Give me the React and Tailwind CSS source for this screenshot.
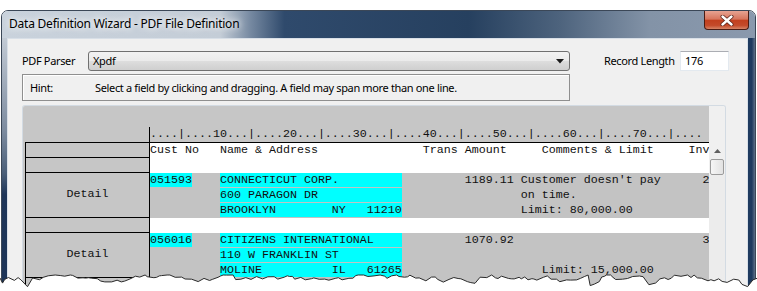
import React from "react";

const pad = (s, n) => s + " ".repeat(Math.max(0, n - s.length));
const sp = (n) => " ".repeat(n);
const C = ({ children }) => <span className="bg-[#00ffff]">{children}</span>;

const torn = (() => {
  let s = 12345;
  const rnd = () => {
    s = (s * 16807) % 2147483647;
    return s / 2147483647;
  };
  const pts = [];
  let x = 0;
  let y = 10;
  while (x <= 762) {
    pts.push([x, y]);
    x += 2 + rnd() * 5;
    let ny = y + (rnd() - 0.5) * 6;
    if (rnd() > 0.9) ny = 15 + rnd() * 4;
    y = Math.min(19, Math.max(7, ny));
    if (y > 14 && rnd() > 0.4) y = 9 + rnd() * 3;
  }
  return pts;
})();
const tornLine = torn.map((p) => `${p[0].toFixed(1)},${p[1].toFixed(1)}`).join(" L");

const Line = ({ children, className = "" }) => (
  <div className={"h-[15px] leading-[15px] whitespace-pre " + className}>{children}</div>
);

const ruler =
  "....|....10...|....20...|....30...|....40...|....50...|....60...|....70...|....";
const header =
  "Cust No   Name & Address" + sp(15) + "Trans Amount" + sp(5) + "Comments & Limit" + sp(5) + "Inv";

function LeftCell({ h, children }) {
  return (
    <div
      className={
        "w-[125px] shrink-0 border-l border-r border-b border-black bg-[#c6c6c6] flex items-center justify-center " +
        h
      }
    >
      {children}
    </div>
  );
}

export default function App() {
  return (
    <div className="relative w-[757px] h-[291px] bg-white overflow-hidden font-['Noto_Sans','Liberation_Sans',sans-serif] text-[11px] tracking-[-0.35px] text-black">
      {/* window */}
      <div className="mt-[10px] ml-[1px] w-[755px] h-[290px] flex flex-col border border-[#3b4757] rounded-t-[7px] overflow-hidden">
        {/* title bar */}
        <div className="h-[27px] shrink-0 flex items-start bg-[linear-gradient(90deg,#c9d2dc_0%,#c4cdd7_29%,#7689a1_33%,#2f4a6c_37.5%,#26405f_62%,#4d637d_74%,#8393a7_86%,#8a99ad_100%)]">
          <div className="pl-[7px] pt-[5px] text-[12px] tracking-[-0.22px] leading-[16px] text-black [text-shadow:0_0_6px_#ffffff,0_0_10px_#ffffff]">
            Data Definition Wizard - PDF File Definition
          </div>
          <div className="ml-auto mr-[6px] w-[45px] h-[19px] rounded-b-[4px] border border-t-0 border-[#4a1c14] bg-[linear-gradient(180deg,#e7a392_0%,#d7755d_45%,#c2401f_52%,#c44a2a_80%,#d68466_100%)] flex items-center justify-center">
            <svg width="14" height="11" viewBox="0 0 14 11">
              <path d="M2.5 1.5 L11.5 9.5 M11.5 1.5 L2.5 9.5" stroke="#5b2218" strokeWidth="4" strokeLinecap="round" />
              <path d="M2.5 1.5 L11.5 9.5 M11.5 1.5 L2.5 9.5" stroke="#ffffff" strokeWidth="2.4" strokeLinecap="round" />
            </svg>
          </div>
        </div>

        {/* body */}
        <div className="flex flex-1 min-h-0">
          <div className="w-[5px] shrink-0 bg-[linear-gradient(180deg,#c2cad4_0%,#7b8a9e_36%,#4a5e78_52%,#1f3659_60%,#1c3457_100%)]" />
          {/* client */}
          <div className="w-[741px] shrink-0 border border-b-0 border-[#d8dfe7] bg-[#f0f0f0] flex flex-col">
            {/* row 1 */}
            <div className="flex items-center mt-[12px] pl-[14px] h-[20px]">
              <div className="w-[66px] leading-[16px]">PDF Parser</div>
              <div className="w-[482px] h-[20px] rounded-[3px] border border-[#707070] bg-[linear-gradient(180deg,#f2f2f2_0%,#ebebeb_48%,#dddddd_52%,#cfcfcf_100%)] flex items-center pl-[4px] pr-[5px]">
                <span className="leading-[16px]">Xpdf</span>
                <svg className="ml-auto" width="8" height="5" viewBox="0 0 8 5">
                  <path d="M0 0 L8 0 L4 4.5 Z" fill="#1a1a1a" />
                </svg>
              </div>
              <div className="ml-[34px] w-[76px] leading-[16px]">Record Length</div>
              <div className="w-[49px] h-[20px] bg-white border border-[#e3e9ef] border-t-[#abadb3] flex items-center pl-[4px] leading-[16px]">
                176
              </div>
            </div>
            {/* hint */}
            <div className="mt-[3px] ml-[14px] w-[548px] h-[27px] border border-[#8f8f8f] shadow-[inset_1px_1px_0_#ffffff] flex items-center">
              <div className="pl-[7px] w-[72px] leading-[16px]">Hint:</div>
              <div className="leading-[16px]">
                Select a field by clicking and dragging. A field may span more than one line.
              </div>
            </div>
            {/* panel */}
            <div className="mt-[4px] ml-[14px] w-[704px] flex-1 border border-b-0 border-[#d3dbe3] rounded-t-[3px] flex overflow-hidden">
              <div className="w-[686px] shrink-0 bg-[#c6c6c6] flex flex-col font-['Liberation_Mono','Courier_New',monospace] text-[11.67px] tracking-normal text-[#111]">
                <div className="h-[21px] shrink-0" />
                <div className="h-[15px] shrink-0 flex">
                  <div className="w-[126px] shrink-0" />
                  <div className="border-l border-black w-[560px] overflow-hidden">
                    <Line>{ruler}</Line>
                  </div>
                </div>
                <div className="ml-[2px] border-t border-black flex flex-col">
                  {/* header row */}
                  <div className="flex">
                    <LeftCell h="h-[15px]" />
                    <div className="w-[559px] bg-white overflow-hidden">
                      <Line>{header}</Line>
                    </div>
                  </div>
                  <div className="flex">
                    <LeftCell h="h-[15px]" />
                    <div className="w-[559px] bg-white" />
                  </div>
                  {/* record 1 */}
                  <div className="flex">
                    <LeftCell h="h-[45px]">Detail</LeftCell>
                    <div className="w-[559px] bg-[#c3c3c3] overflow-hidden">
                      <Line>
                        <C>051593</C>
                        {sp(4)}
                        <C>{pad("CONNECTICUT CORP.", 26)}</C>
                        {sp(9) + "1189.11 Customer doesn't pay" + sp(6) + "2"}
                      </Line>
                      <Line>
                        {sp(10)}
                        <C>{pad("600 PARAGON DR", 26)}</C>
                        {sp(17) + "on time."}
                      </Line>
                      <Line>
                        {sp(10)}
                        <C>{"BROOKLYN        NY   11210"}</C>
                        {sp(17) + "Limit: 80,000.00"}
                      </Line>
                    </div>
                  </div>
                  {/* separator */}
                  <div className="flex">
                    <LeftCell h="h-[15px]" />
                    <div className="w-[559px] bg-white" />
                  </div>
                  {/* record 2 */}
                  <div className="flex">
                    <LeftCell h="h-[45px]">Detail</LeftCell>
                    <div className="w-[559px] bg-[#c3c3c3] overflow-hidden">
                      <Line>
                        <C>056016</C>
                        {sp(4)}
                        <C>{pad("CITIZENS INTERNATIONAL", 26)}</C>
                        {sp(9) + "1070.92" + sp(27) + "3"}
                      </Line>
                      <Line>
                        {sp(10)}
                        <C>{pad("110 W FRANKLIN ST", 26)}</C>
                      </Line>
                      <Line>
                        {sp(10)}
                        <C>{"MOLINE          IL   61265"}</C>
                        {sp(20) + "Limit: 15,000.00"}
                      </Line>
                    </div>
                  </div>
                  <div className="flex">
                    <LeftCell h="h-[45px]" />
                    <div className="w-[559px] bg-[#c3c3c3]" />
                  </div>
                </div>
              </div>
              {/* scrollbar column */}
              <div className="w-[16px] shrink-0 bg-[#f0f0f0] flex flex-col">
                <div className="h-[36px] shrink-0" />
                <div className="h-[17px] shrink-0 flex items-center justify-center">
                  <svg width="7" height="4" viewBox="0 0 7 4">
                    <path d="M0 4 L7 4 L3.5 0 Z" fill="#606060" />
                  </svg>
                </div>
                <div className="mx-[1px] h-[16px] rounded-[2px] border border-[#9b9b9b] bg-[linear-gradient(90deg,#f6f6f6,#e2e2e2)]" />
                <div className="flex-1 bg-[#ececec]" />
              </div>
            </div>
          </div>
          <div className="w-[7px] shrink-0 bg-[linear-gradient(90deg,#1e3a5f_0%,#1e3a5f_55%,#5f7088_100%)]" />
        </div>
      </div>

      {/* torn bottom edge */}
      <svg className="absolute left-0 bottom-0" width="757" height="23" viewBox="0 0 757 23">
        <path d={`M0,23 L${tornLine} L762,23 Z`} fill="#ffffff" />
        <path d={`M${tornLine}`} fill="none" stroke="#2a2a2a" strokeWidth="1" />
      </svg>
    </div>
  );
}
